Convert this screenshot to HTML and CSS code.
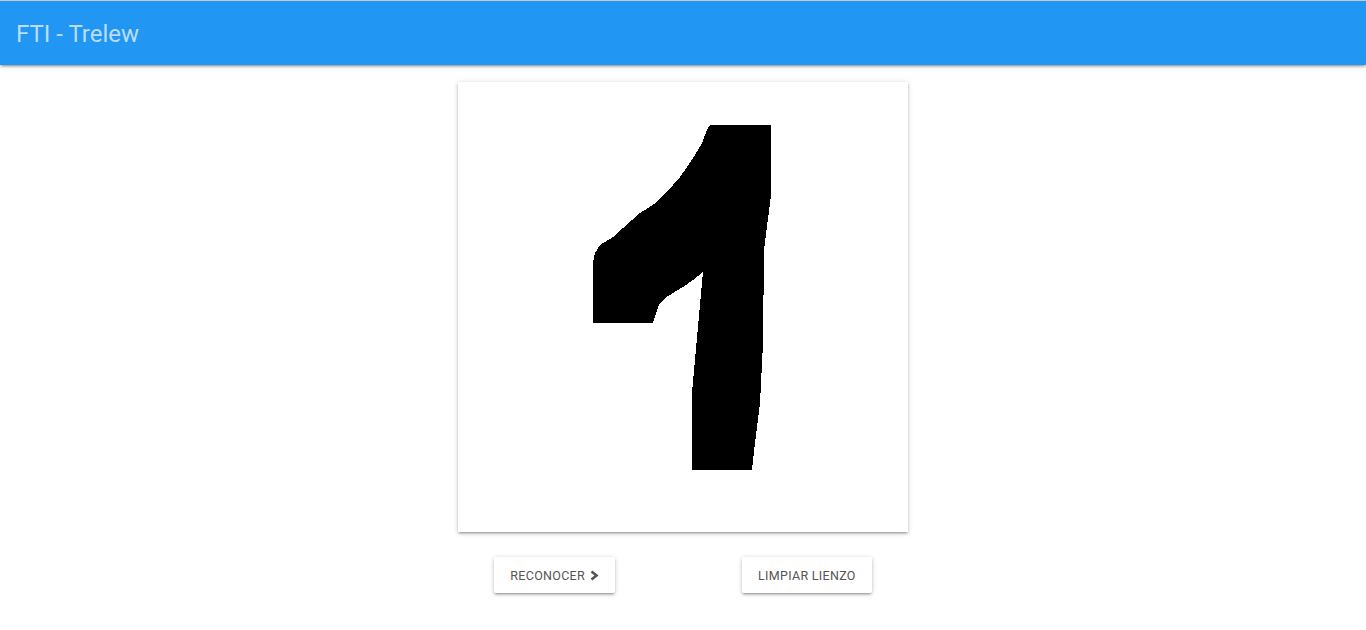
FILE: index.html
```html
<!DOCTYPE html>
<html lang="es">
<head>
<meta charset="utf-8">
<title>FTI - Trelew</title>
<link rel="stylesheet" href="styles.css">
</head>
<body>
<header class="navbar">
  <span class="brand">FTI - Trelew</span>
</header>
<main class="main">
  <div class="canvas-card">
    <svg class="drawing" width="450" height="450" viewBox="0 0 450 450" shape-rendering="crispEdges">
      <polygon fill="#000" points="252,43 313,43 313,113 306,168 305,261 302,321 297,361 294,388 234,388 234,310 245,190 235,198 225,205 215,211 207,216 202,221 199,228 196,238 195,241 135,241 135,180 137,171 142,163 147,160 155,155 165,146 174,138 182,131 190,126 199,120 207,111 215,103 222,95 229,85 237,73 244,61 249,48"/>
    </svg>
  </div>
  <div class="actions">
    <button class="btn">RECONOCER
      <svg class="chev" width="9" height="11" viewBox="0 0 9 11"><path d="M1.5 1.5 L6.5 5.5 L1.5 9.5" fill="none" stroke="#555" stroke-width="2.6"/></svg>
    </button>
    <button class="btn">LIMPIAR LIENZO</button>
  </div>
</main>
</body>
</html>
```
FILE: styles.css
```css
html, body {
  margin: 0;
  padding: 0;
  background: #fff;
  font-family: Roboto, "Liberation Sans", Arial, sans-serif;
}
.navbar {
  height: 64px;
  border-top: 1px solid #c9c9c9;
  background: #2196f3;
  display: flex;
  align-items: center;
  padding-left: 16px;
  box-shadow: 0 2px 2px 0 rgba(0,0,0,.14), 0 3px 1px -2px rgba(0,0,0,.12), 0 1px 5px 0 rgba(0,0,0,.2);
}
.brand {
  font-size: 24px;
  color: rgba(255,255,255,0.7);
  line-height: 1;
  margin-top: 2px;
}
.main {
  display: flex;
  flex-direction: column;
  align-items: center;
  padding-top: 17px;
  padding-bottom: 20px;
}
.canvas-card {
  width: 450px;
  height: 450px;
  background: #fff;
  box-shadow: 0 2px 2px 0 rgba(0,0,0,.14), 0 3px 1px -2px rgba(0,0,0,.12), 0 1px 5px 0 rgba(0,0,0,.2);
}
.drawing { display: block; }
.actions {
  display: flex;
  gap: 127px;
  margin-top: 25px;
}
.btn {
  height: 36px;
  padding: 0 16px;
  border: none;
  border-radius: 2px;
  background: #fff;
  color: #555;
  font-family: Roboto, "Liberation Sans", Arial, sans-serif;
  font-size: 12.5px;
  letter-spacing: 0.3px;
  display: flex;
  align-items: center;
  gap: 5px;
  box-shadow: 0 2px 2px 0 rgba(0,0,0,.14), 0 3px 1px -2px rgba(0,0,0,.12), 0 1px 5px 0 rgba(0,0,0,.2);
}
.chev { display: block; }
```
